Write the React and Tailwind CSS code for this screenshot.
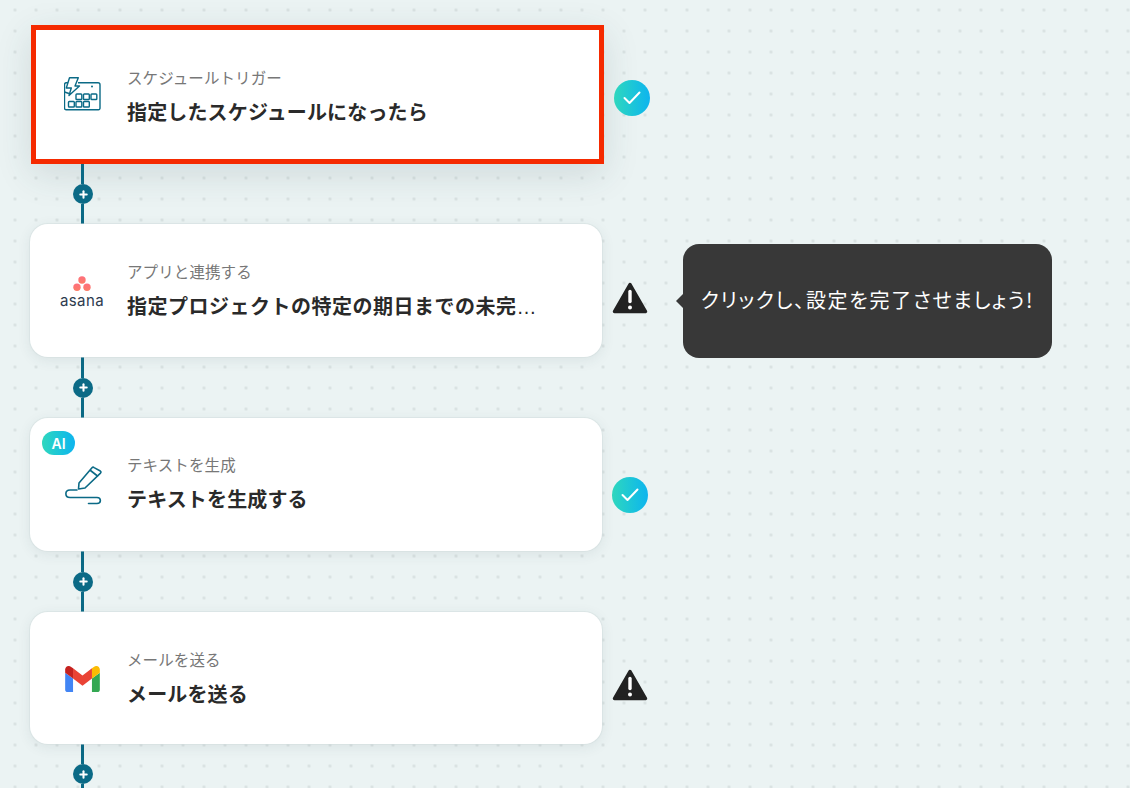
import React from "react"
import { Plus } from "lucide-react"

const fontStack = "font-['Noto_Sans_CJK_JP','Noto_Sans',sans-serif]"

const ScheduleIcon = () => (
    <svg width="38" height="35" viewBox="64 79 38 35" fill="none" stroke="#0b6a86" strokeWidth="1.400" strokeLinejoin="round">
        <path d="M69 84.700h-2.500a2 2 0 0 0-2 2v23.500a1.500 1.500 0 0 0 1.500 1.500h32.500a1.500 1.500 0 0 0 1.500-1.500v-23.500a2 2 0 0 0-2-2h-20" />
        <path d="M64.500 94l4.500 1.500" />
        <path d="M69.500 79.700h8.800l-3.300 8.300h4.500l-10.500 9.500 2.300-7.500h-5z" fill="#fff" />
        <rect x="76" y="96" width="5.800" height="5.500" rx="0.800" />
        <rect x="83.500" y="96" width="5.800" height="5.500" rx="0.800" />
        <rect x="91" y="96" width="5.800" height="5.500" rx="0.800" />
        <rect x="68.500" y="103.500" width="5.800" height="5.500" rx="0.800" />
        <rect x="76" y="103.500" width="5.800" height="5.500" rx="0.800" />
        <rect x="83.500" y="103.500" width="5.800" height="5.500" rx="0.800" />
        <circle cx="92" cy="88.500" r="1" fill="#0b6a86" stroke="none" />
    </svg>
)

const AsanaIcon = () => (
    <div className="mt-[2px] flex flex-col items-center">
        <svg width="18" height="16" viewBox="0 0 18 16">
            <defs>
                <linearGradient id="asanaDot" x1="0" y1="0" x2="0" y2="1">
                    <stop offset="0" stopColor="#ff6f7d" />
                    <stop offset="1" stopColor="#fb7d66" />
                </linearGradient>
            </defs>
            <circle cx="9" cy="4" r="3.700" fill="url(#asanaDot)" />
            <circle cx="4" cy="11.300" r="3.700" fill="url(#asanaDot)" />
            <circle cx="14" cy="11.300" r="3.700" fill="url(#asanaDot)" />
        </svg>
        <span className="mt-[2px] font-['Inter',sans-serif] text-[15px] leading-[14px] font-normal tracking-[0.4px] text-[#2d3b4e]">asana</span>
    </div>
)

const PenIcon = () => (
    <svg className="ml-[2px]" width="38" height="42" viewBox="64 464 38 42" fill="none" stroke="#0b6a86" strokeWidth="1.600" strokeLinecap="round" strokeLinejoin="round">
        <path d="M79 483L92 467.800a1.500 1.500 0 0 1 2.100-0.200L100.300 471a1.500 1.500 0 0 1 0.200 2.100L85 488l-6.500 1z" />
        <path d="M90.500 470.500l7 5.500" />
        <path d="M77 490h-7c-5.500 0-5.500 7.500 0 7.500h27c4.500 0 4.500 6 0 6h-8.500" />
    </svg>
)

const GmailIcon = () => (
    <svg className="mt-[2px]" width="35" height="26" viewBox="52 42 88 66">
        <path fill="#4285f4" d="M58 108h14V74L52 59v43c0 3.320 2.690 6 6 6" />
        <path fill="#34a853" d="M120 108h14c3.320 0 6-2.690 6-6V59l-20 15" />
        <path fill="#fbbc04" d="M120 48v26l20-15v-8c0-7.420-8.470-11.650-14.400-7.200" />
        <path fill="#ea4335" d="M72 74V48l24 18 24-18v26L96 92" />
        <path fill="#c5221f" d="M52 51v8l20 15V48l-5.600-4.200c-5.940-4.450-14.400-.22-14.400 7.200" />
    </svg>
)

const CheckBadge = ({ className }) => (
    <div className={`flex h-9 w-9 shrink-0 items-center justify-center rounded-full bg-gradient-to-r from-[#2fd7bd] to-[#0fb4ee] ${className}`}>
        <svg width="18" height="14" viewBox="0 0 18 14" fill="none" stroke="#fff" strokeWidth="2" strokeLinecap="round" strokeLinejoin="round">
            <path d="M1.500 7l5 5L16.500 1.500" />
        </svg>
    </div>
)

const WarnBadge = ({ className }) => (
    <svg className={`shrink-0 ${className}`} width="36" height="36" viewBox="0 0 36 36">
        <path d="M18 4.500L33.500 31.500H2.500z" fill="#222" stroke="#222" strokeWidth="3.500" strokeLinejoin="round" />
        <path d="M18 11.500v10" stroke="#fff" strokeWidth="3.400" strokeLinecap="round" />
        <circle cx="18" cy="27.500" r="2" fill="#fff" />
    </svg>
)

// line with the round add button in the middle
const Connector = ({ height }) => (
    <div className="ml-[73px] flex w-5 flex-col" style={{ height }}>
        <div className="ml-[8px] w-[3px] flex-1 bg-[#0b6a86]" />
        <div className="flex h-5 w-5 shrink-0 items-center justify-center rounded-full bg-[#0b6a86]">
            <Plus size={11} color="#fff" strokeWidth={4.500} />
        </div>
        <div className="ml-[8px] w-[3px] flex-1 bg-[#0b6a86]" />
    </div>
)

const CardText = ({ label, title, titleClass = "tracking-[0.15px]", className = "mb-[1px]" }) => (
    <div className={`flex min-w-0 flex-col gap-[9px] whitespace-nowrap ${className}`}>
        <span className="text-[15.500px] leading-[26px] tracking-[0.1px] text-[#777]">{label}</span>
        <span className={`text-[20px] leading-[26px] font-bold text-[#2a2a2a] ${titleClass}`}>{title}</span>
    </div>
)

const Card = ({ icon, label, title, titleClass, textClass, height, badge }) => (
    <div className="relative flex w-[572px] shrink-0 items-center rounded-[18px] bg-white pb-[3px] pl-[29px] shadow-[0_0_0_1px_rgba(210,222,222,0.5),0_3px_14px_rgba(40,70,75,0.09)]" style={{ height }}>
        {badge}
        <div className="mt-[3px] mr-[22px] flex w-[46px] shrink-0 justify-center">{icon}</div>
        <CardText label={label} title={title} titleClass={titleClass} className={textClass} />
    </div>
)

export default function App() {
    return (
        <div className={`relative h-[788px] w-[1130px] overflow-hidden bg-[#ebf3f3] bg-[radial-gradient(circle,#d9e1e1_1.200px,transparent_1.800px)] bg-[length:21px_21px] bg-[position:4.500px_-0.500px] pt-[25px] ${fontStack}`}>
            {/* trigger step, selected */}
            <div className="flex items-start">
                <div className="ml-[31px] flex h-[139px] w-[573px] shrink-0 items-center border-[5px] border-[#f52a00] bg-white pl-[24px] shadow-[0_10px_34px_rgba(40,70,75,0.14)]">
                    <div className="mr-[21px] flex w-[46px] shrink-0 justify-center"><ScheduleIcon /></div>
                    <CardText label="スケジュールトリガー" title="指定したスケジュールになったら" className="mt-[1px] mb-[1px]" />
                </div>
                <CheckBadge className="mt-[55px] ml-[10px]" />
            </div>
            <Connector height={60} />

            <div className="relative flex items-start pl-[30px]">
                <Card
                    icon={<AsanaIcon />}
                    label="アプリと連携する"
                    title={<>指定プロジェクトの特定の期日までの未完<span className="font-['Liberation_Sans',sans-serif] font-normal tracking-normal">…</span></>}
                    titleClass="tracking-[0.5px]"
                    height={133}
                />
                <WarnBadge className="mt-[56px] ml-[10px]" />
                <div className="absolute top-[20px] left-[683px] flex h-[114px] w-[369px] items-center justify-center rounded-[16px] bg-[#383838] pb-[2px] text-[20px] tracking-[1.7px] whitespace-nowrap text-white [font-feature-settings:'palt']">
                    <div className="absolute top-[49px] -left-[7px] h-0 w-0 border-y-[8px] border-r-[8px] border-y-transparent border-r-[#383838]" />
                    クリックし、設定を完了させましょう!
                </div>
            </div>
            <Connector height={61} />

            <div className="flex items-start pl-[30px]">
                <Card
                    icon={<PenIcon />}
                    label="テキストを生成"
                    title="テキストを生成する"
                    textClass="mb-[4px]"
                    height={133}
                    badge={<div className="absolute top-[13px] left-[12px] flex h-[24px] w-[33px] items-center justify-center rounded-full bg-gradient-to-r from-[#2fd7bd] to-[#0fb4ee] font-['Inter',sans-serif] text-[14px] font-semibold text-white">AI</div>}
                />
                <CheckBadge className="mt-[59px] ml-[10px]" />
            </div>
            <Connector height={61} />

            <div className="flex items-start pl-[30px]">
                <Card icon={<GmailIcon />} label="メールを送る" title="メールを送る" height={132} />
                <WarnBadge className="mt-[55px] ml-[10px]" />
            </div>
            <Connector height={60} />
        </div>
    )
}
